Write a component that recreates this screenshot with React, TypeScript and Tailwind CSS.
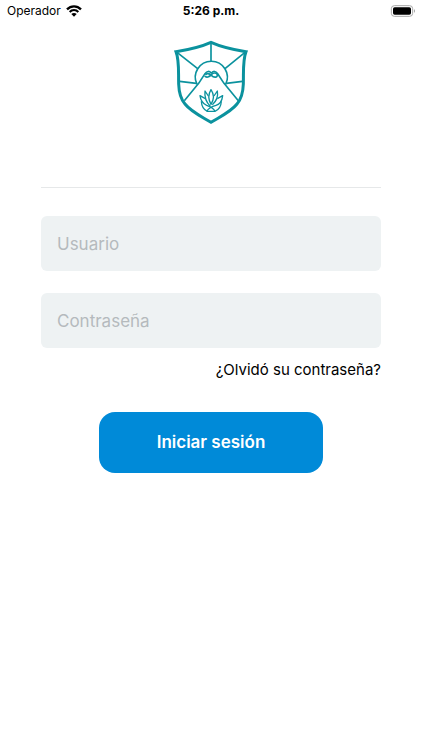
import { useState } from 'react'
import type { FormEvent } from 'react'

function WifiIcon() {
  return (
    <svg viewBox="0 0 48 36" className="w-4 h-3" fill="none" aria-hidden="true">
      <path d="M3 13 C15 1 33 1 45 13" stroke="#000" strokeWidth="7" />
      <path d="M11 21 C18 13 30 13 37 21" stroke="#000" strokeWidth="6" />
      <path d="M24 35 L16 27 C20 23 28 23 32 27 Z" fill="#000" />
    </svg>
  )
}

function BatteryIcon() {
  return (
    <svg viewBox="0 0 75 36" className="w-[25px] h-3" aria-hidden="true">
      <rect x="4" y="2" width="64" height="32" rx="9" fill="#fff" stroke="#a8a8a8" strokeWidth="3" />
      <rect x="9" y="7" width="54" height="22" rx="5" fill="#000" />
      <path d="M72 13 C76 14 76 22 72 23 Z" fill="#a8a8a8" />
    </svg>
  )
}

function ShieldLogo() {
  return (
    <svg
      viewBox="0 0 270 288"
      className="w-[90px] h-24"
      fill="none"
      stroke="#0b929e"
      strokeWidth="5"
      strokeLinejoin="round"
      role="img"
      aria-label="Escudo"
    >
      {/* Contorno */}
      <path
        d="M135 25 C106 38 68 47 30 53 C40 78 37 112 38 150 C39 178 43 194 57 210 C76 234 108 248 135 265 C162 248 194 234 213 210 C227 194 231 178 232 150 C233 112 230 78 240 53 C202 47 164 38 135 25 Z"
        strokeWidth="9"
        strokeLinejoin="miter"
      />
      {/* Sol y rayos */}
      <path d="M93 151 A48 48 0 1 1 179 151" />
      <path d="M135 27 V82 M34 56 L95 104 M236 56 L177 104 M41 142 L91 148 M229 142 L181 148" />
      {/* Volcán */}
      <path d="M55 200 L98 148 L117 119 C123 110 130 111 136 117 C142 111 149 110 155 119 L174 148 L217 200" />
      <path
        d="M116 126 C121 132 130 129 136 122 C143 115 151 116 154 122 C155 131 144 132 136 124 C130 118 121 117 119 123"
        strokeWidth="5"
      />
      {/* Agave */}
      <g strokeWidth="4">
        <path d="M135 167 C127 180 125 194 135 211 C146 194 144 180 135 167 Z" />
        <path d="M127 186 L117 171 C115 188 120 204 133 217 M144 186 L154 171 C157 188 152 201 139 212" />
        <path d="M118 194 L102 185 C104 200 110 209 122 214 C133 218 143 223 147 232" />
        <path d="M154 194 L170 185 C168 203 161 211 150 214 C138 217 128 222 122 232" />
        <path d="M106 202 C107 218 114 228 124 232 H147 C158 228 165 218 166 202" />
      </g>
    </svg>
  )
}

interface FieldProps {
  label: string
  type: string
  value: string
  onChange: (value: string) => void
}

function Field({ label, type, value, onChange }: FieldProps) {
  return (
    <input
      type={type}
      value={value}
      aria-label={label}
      placeholder={label}
      onChange={e => onChange(e.target.value)}
      className="block w-full h-[55px] px-4 rounded-md bg-[#eef2f3] text-[17px] text-black placeholder:text-[#b5babd] outline-none"
    />
  )
}

export default function App() {
  const [username, setUsername] = useState('')
  const [password, setPassword] = useState('')

  const handleSubmit = (e: FormEvent) => {
    e.preventDefault()
  }

  return (
    <div className="min-h-screen bg-white text-black font-['Inter','Liberation_Sans',sans-serif]">

      {/* Barra de estado */}
      <header className="grid grid-cols-3 items-center h-[22px] px-[7px] text-xs">
        <div className="flex items-center gap-[5px]">
          <span>Operador</span>
          <WifiIcon />
        </div>
        <span className="text-center font-bold">5:26 p.m.</span>
        <div className="flex justify-end">
          <BatteryIcon />
        </div>
      </header>

      <main className="px-[41px] pt-3">
        <div className="flex justify-center">
          <ShieldLogo />
        </div>
        <hr className="mt-[57px] border-[#e6e8e9]" />

        <form onSubmit={handleSubmit} className="flex flex-col pt-7">
          <div className="flex flex-col gap-[22px]">
            <Field label="Usuario" type="text" value={username} onChange={setUsername} />
            <Field label="Contraseña" type="password" value={password} onChange={setPassword} />
          </div>
          <a href="#recuperar" className="self-end mt-3 text-[15px] leading-5">¿Olvidó su contraseña?</a>
          <button type="submit" className="self-center mt-8 w-56 h-[61px] rounded-2xl bg-[#008ad8] text-[17px] font-semibold text-white">
            Iniciar sesión
          </button>
        </form>
      </main>
    </div>
  )
}
